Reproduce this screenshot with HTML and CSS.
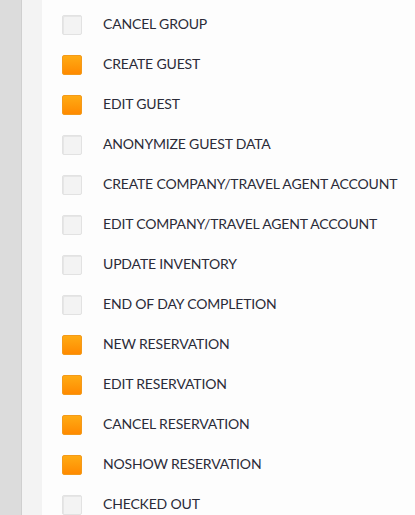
FILE: index.html
```html
<!DOCTYPE html>
<html lang="en">
<head>
    <meta charset="UTF-8">
    <meta name="viewport" content="width=device-width, initial-scale=1.0">
    <title>Permissions</title>
    <link rel="stylesheet" href="styles.css">
</head>
<body>
    <div class="page">
        <div class="rail">
            <span class="tick"></span><span class="tick"></span><span class="tick"></span>
            <span class="tick"></span><span class="tick"></span><span class="tick"></span>
            <span class="tick"></span><span class="tick"></span><span class="tick"></span>
        </div>
        <div class="gutter"></div>
        <ul class="perms">
            <li class="perm"><span class="box"></span>CANCEL GROUP</li>
            <li class="perm"><span class="box on"></span>CREATE GUEST</li>
            <li class="perm"><span class="box on"></span>EDIT GUEST</li>
            <li class="perm"><span class="box"></span>ANONYMIZE GUEST DATA</li>
            <li class="perm"><span class="box"></span>CREATE COMPANY/TRAVEL AGENT ACCOUNT</li>
            <li class="perm"><span class="box"></span>EDIT COMPANY/TRAVEL AGENT ACCOUNT</li>
            <li class="perm"><span class="box"></span>UPDATE INVENTORY</li>
            <li class="perm"><span class="box"></span>END OF DAY COMPLETION</li>
            <li class="perm"><span class="box on"></span>NEW RESERVATION</li>
            <li class="perm"><span class="box on"></span>EDIT RESERVATION</li>
            <li class="perm"><span class="box on"></span>CANCEL RESERVATION</li>
            <li class="perm"><span class="box on"></span>NOSHOW RESERVATION</li>
            <li class="perm"><span class="box"></span>CHECKED OUT</li>
        </ul>
    </div>
</body>
</html>
```

FILE: styles.css
```css
body {
    margin: 0;
    padding: 0;
    font-family: Lato, "Liberation Sans", sans-serif;
    background-color: #fdfdfd;
    overflow: hidden;
}
.page {
    display: flex;
    height: 515px;
}
.rail {
    width: 22px;
    flex-shrink: 0;
    background-color: #dcdcdc;
    border-right: 1px solid #cfcfcf;
    display: flex;
    flex-direction: column;
    gap: 59px;
    padding-top: 45px;
    box-sizing: border-box;
}
.tick {
    display: block;
    width: 3px;
    height: 1px;
    background-color: #a9a9a9;
}
.gutter {
    width: 20px;
    flex-shrink: 0;
    background-color: #f3f3f3;
}
.perms {
    list-style: none;
    margin: 0;
    padding: 4px 0 0 20px;
}
.perm {
    display: flex;
    align-items: center;
    height: 40px;
    font-size: 14px;
    letter-spacing: -0.17px;
    line-height: 18px;
    color: #2b2b38;
    white-space: nowrap;
}
.box {
    width: 20px;
    height: 20px;
    margin-right: 21px;
    margin-top: 2px;
    flex-shrink: 0;
    box-sizing: border-box;
    border-radius: 2px;
    background-color: #f3f3f3;
    border: 1px solid #e2e2e2;
    box-shadow: inset 1px 1px 0 #e6e6e6;
}
.box.on {
    background: linear-gradient(#ffab14, #ff8a00);
    border-color: #f49a1a;
    box-shadow: none;
}
```
